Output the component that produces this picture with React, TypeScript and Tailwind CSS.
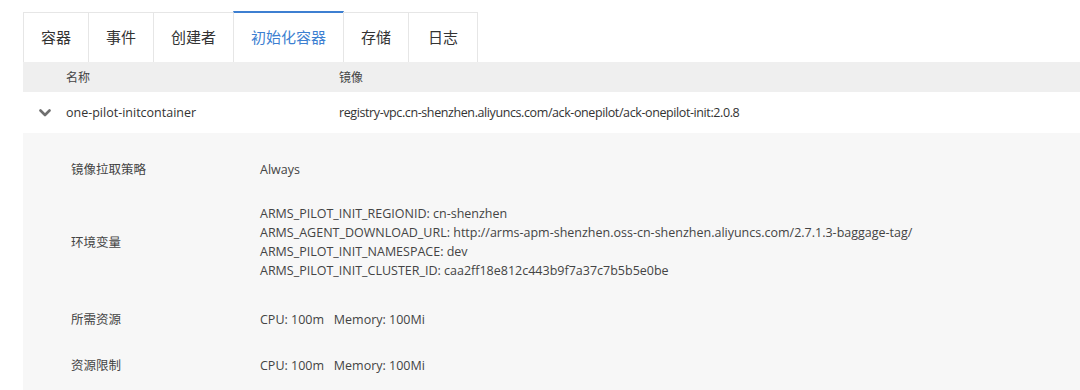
const tabs = ["容器", "事件", "创建者", "初始化容器", "存储", "日志"];

const envVars = [
  "ARMS_PILOT_INIT_REGIONID: cn-shenzhen",
  "ARMS_AGENT_DOWNLOAD_URL: http://arms-apm-shenzhen.oss-cn-shenzhen.aliyuncs.com/2.7.1.3-baggage-tag/",
  "ARMS_PILOT_INIT_NAMESPACE: dev",
  "ARMS_PILOT_INIT_CLUSTER_ID: caa2ff18e812c443b9f7a37c7b5b5e0be",
];

function Chevron() {
  return (
    <svg width="12" height="8" viewBox="0 0 12 8" className="text-[#6f6f6f]">
      <path d="M1.5 1.5 L6 6 L10.5 1.5" fill="none" stroke="currentColor" strokeWidth="2.6" strokeLinecap="round" strokeLinejoin="round" />
    </svg>
  );
}

function DetailRow({ label, children, className }: { label: string; children: React.ReactNode; className?: string }) {
  return (
    <div className={`flex items-center ${className ?? ""}`}>
      <div className="w-[237px] shrink-0 pl-[48px] text-[#444]">{label}</div>
      <div className="text-[#444]">{children}</div>
    </div>
  );
}

export default function App() {
  return (
    <div
      className="h-[390px] w-[1080px] overflow-hidden bg-white pl-[23px] pt-[11px] text-[12.5px] leading-[19px] text-[#333]"
      style={{ fontFamily: '"Open Sans", "Noto Sans CJK SC", sans-serif' }}
    >
      <div className="flex h-[51px]">
        {tabs.map((tab) => {
          const active = tab === "初始化容器";
          return (
            <div
              key={tab}
              className={`-mr-px flex items-center justify-center border-x border-[#e6e6e6] px-[17px] text-[15px] ${
                active
                  ? "border-t-2 border-t-[#3d7fd1] bg-white text-[#3d7fd1]"
                  : "mt-px border-t border-t-[#e6e6e6] bg-white text-[#333]"
              } ${tab === "日志" ? "px-[19px]" : ""}`}
            >
              {tab}
            </div>
          );
        })}
      </div>

      <div className="flex h-[30px] items-center bg-[#efefef] text-[12px] text-[#444]">
        <div className="w-[316px] pl-[43px]">名称</div>
        <div>镜像</div>
      </div>

      <div className="flex h-[41px] items-center bg-white">
        <div className="flex w-[43px] justify-center pl-[1px]">
          <Chevron />
        </div>
        <div className="w-[273px]">one-pilot-initcontainer</div>
        <div className="tracking-[-0.4px]">registry-vpc.cn-shenzhen.aliyuncs.com/ack-onepilot/ack-onepilot-init:2.0.8</div>
      </div>

      <div className="h-[260px] bg-[#f7f7f7] pt-[27px]">
        <DetailRow label="镜像拉取策略">Always</DetailRow>
        <DetailRow label="环境变量" className="mt-[25px]">
          {envVars.map((line) => (
            <div key={line}>{line}</div>
          ))}
        </DetailRow>
        <DetailRow label="所需资源" className="mt-[30px]">
          CPU: 100m&nbsp;&nbsp;&nbsp;Memory: 100Mi
        </DetailRow>
        <DetailRow label="资源限制" className="mt-[27px]">
          CPU: 100m&nbsp;&nbsp;&nbsp;Memory: 100Mi
        </DetailRow>
      </div>
    </div>
  );
}
